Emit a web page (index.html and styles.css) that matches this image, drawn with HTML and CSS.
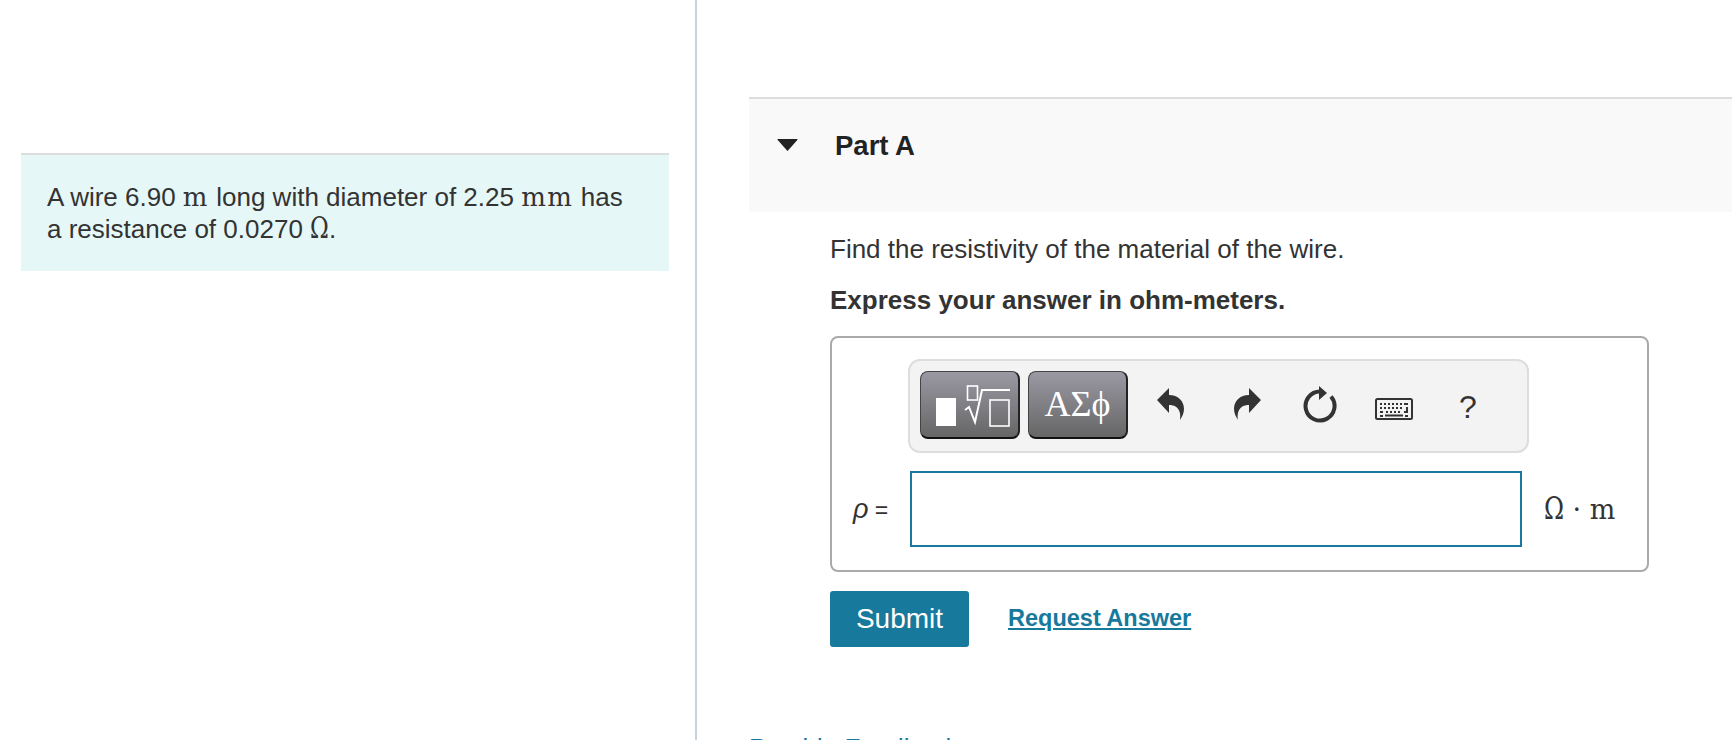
FILE: index.html
```html
<!DOCTYPE html>
<html lang="en">
<head>
<meta charset="utf-8">
<title>Part A</title>
<link rel="stylesheet" href="styles.css">
</head>
<body>
<div class="page">
  <aside class="left">
    <div class="intro">A wire 6.90 <span class="math">m</span> long with diameter of 2.25 <span class="math">mm</span> has a resistance of 0.0270 <span class="ohm">Ω</span>.</div>
  </aside>
  <main class="right">
    <header class="part-head">
      <svg class="caret" viewBox="0 0 21 12"><path d="M1 0H20Q21 0 20.300 1L11 11.500Q10.500 12 10 11.500L.7 1Q0 0 1 0Z"/></svg>
      <h2 class="part-title">Part A</h2>
    </header>
    <div class="part-body">
      <p class="question">Find the resistivity of the material of the wire.</p>
      <p class="instruction">Express your answer in ohm-meters.</p>
      <div class="answer-box">
        <div class="toolbar">
          <div class="tbtn tbtn-math">
            <svg class="math-icon" viewBox="0 0 90 48" fill="none" stroke="#fff" stroke-width="1.600">
              <rect x="15" y="13" width="20" height="28" fill="#fff" stroke="none"/>
              <rect x="46.500" y="1" width="10" height="14"/>
              <path d="M44 25L48 22L54 37L61 5H89" stroke-width="2"/>
              <rect x="69" y="15" width="19" height="26"/>
            </svg>
          </div>
          <div class="tbtn tbtn-greek">ΑΣϕ</div>
          <svg class="ico ico-undo" viewBox="0 0 27 32"><path d="M0 12L12 0V7C21 7 27 13 27 21C27 25 25 29 23 32C24 26 23 17 12 17V25Z"/></svg>
          <svg class="ico ico-redo" viewBox="0 0 27 32"><path transform="matrix(-1 0 0 1 27 0)" d="M0 12L12 0V7C21 7 27 13 27 21C27 25 25 29 23 32C24 26 23 17 12 17V25Z"/></svg>
          <svg class="ico ico-reset" viewBox="0 0 34 37"><path d="M17 5.500A14.500 14.500 0 1 0 28 10.500" fill="none" stroke="#333" stroke-width="4"/><path d="M16 0L24 7L16 14Z"/></svg>
          <svg class="ico ico-kbd" viewBox="0 0 38 22">
            <rect x="1" y="1" width="36" height="20" rx="1.500" fill="none" stroke="#333" stroke-width="2"/>
            <path d="M5 5h2v2h-2zM9 5h2v2h-2zM13 5h2v2h-2zM17 5h2v2h-2zM21 5h2v2h-2zM25 5h2v2h-2zM29 5h4v2h-4zM5 9h2v2h-2zM9 9h2v2h-2zM13 9h2v2h-2zM17 9h2v2h-2zM21 9h2v2h-2zM25 9h2v2h-2zM31 9h2v6h-2zM29 13h2v2h-2zM5 13h3v2h-3zM11 13h2v2h-2zM15 13h2v2h-2zM19 13h2v2h-2zM23 13h2v2h-2zM5 17h3v2h-3zM10 16.500h18v2h-18zM30 17h3v2h-3z"/>
          </svg>
          <span class="help">?</span>
        </div>
        <div class="input-row">
          <span class="label"><i class="rho">ρ</i> =</span>
          <div class="input"></div>
          <span class="units"><span class="ohm ohm-unit">Ω</span> · m</span>
        </div>
      </div>
      <div class="actions">
        <button class="submit" type="button">Submit</button>
        <a class="request" href="#">Request Answer</a>
      </div>
    </div>
    <a class="feedback" href="#">Provide Feedback</a>
  </main>
</div>
</body>
</html>
```

FILE: styles.css
```css
* { box-sizing: border-box; }
html, body { margin: 0; height: 100%; overflow: hidden; background: #fff; }
body { font-family: "Liberation Sans", Arial, sans-serif; font-size: 26px; color: #333; }
.page { display: flex; height: 740px; overflow: hidden; }
.left { width: 697px; flex: none; border-right: 2px solid #c6d3de; padding: 153px 26px 0 21px; }
.intro { border-top: 2px solid #ddd; background: #e6f7f8; height: 118px; padding: 26px 26px 0; line-height: 32px; }
.math { font-family: "DejaVu Serif", serif; font-size: 26px; letter-spacing: 1.500px; }
.ohm { display: inline-block; width: 19px; font-family: "DejaVu Serif", serif; font-size: 29px; line-height: 1; transform: scaleX(.78); transform-origin: left; }
.right { flex: 1; padding: 97px 0 0 52px; min-width: 0; }
.part-head { display: flex; align-items: flex-start; height: 115px; background: #f9f9f9; border-top: 2px solid #ddd; padding: 32px 0 0 28px; }
.caret { width: 21px; height: 12px; margin-top: 8px; fill: #222; }
.part-title { margin: 0 0 0 37px; font-size: 27.500px; line-height: 30px; font-weight: 700; color: #222; }
.part-body { padding: 0 0 0 81px; }
.question { margin: 21px 0 0; line-height: 32px; }
.instruction { margin: 19px 0 0; line-height: 32px; font-weight: 700; }
.answer-box { width: 819px; height: 236px; margin-top: 20px; border: 2px solid #aaa; border-radius: 8px; padding: 21px 0 0 76px; }
.toolbar { display: flex; align-items: flex-start; width: 621px; height: 94px; background: #f3f3f3; border: 2px solid #ddd; border-radius: 12px; padding: 10px 0 0 10px; }
.tbtn { height: 68px; border: 1px solid #444; border-bottom: 2px solid #111; border-right-width: 2px; border-right-color: #222; border-radius: 8px; background: linear-gradient(#9a99a4, #666); color: #fff; }
.tbtn-math { width: 100px; }
.tbtn-greek { width: 100px; margin-left: 8px; font-family: "Liberation Serif", serif; font-size: 36px; line-height: 64px; text-align: center; }
.math-icon { display: block; width: 90px; height: 48px; margin: 13px 0 0 0; }
.ico { flex: none; fill: #333; }
.ico-undo { width: 27px; height: 32px; margin: 17px 0 0 29px; }
.ico-redo { width: 27px; height: 32px; margin: 17px 0 0 50px; }
.ico-reset { width: 34px; height: 37px; margin: 15px 0 0 42px; }
.ico-kbd { width: 38px; height: 22px; margin: 27px 0 0 38px; }
.help { margin: 20px 0 0 46px; font-size: 32px; line-height: 32px; }
.input-row { display: flex; align-items: center; margin: 18px 0 0 -76px; height: 76px; }
.label { width: 78px; padding-left: 21px; font-size: 23px; }
.rho { font-size: 27px; }
.input { width: 612px; height: 76px; border: 2px solid #17799c; background: #fff; }
.units { margin-left: 22px; font-family: "DejaVu Serif", serif; font-size: 27px; white-space: nowrap; }
.ohm-unit { font-size: 31px; width: 20px; }
.actions { display: flex; align-items: center; margin-top: 19px; }
.submit { width: 139px; height: 56px; border: 0; border-radius: 3px; background: #17799c; color: #fff; font: 400 28px "Liberation Sans", Arial, sans-serif; padding: 0; }
.request { margin: -1px 0 0 39px; color: #17799c; font-size: 23.500px; font-weight: 700; text-decoration: underline; }
.feedback { display: block; margin-top: 85px; color: #17799c; font-size: 26px; text-decoration: none; line-height: 32px; }
```
